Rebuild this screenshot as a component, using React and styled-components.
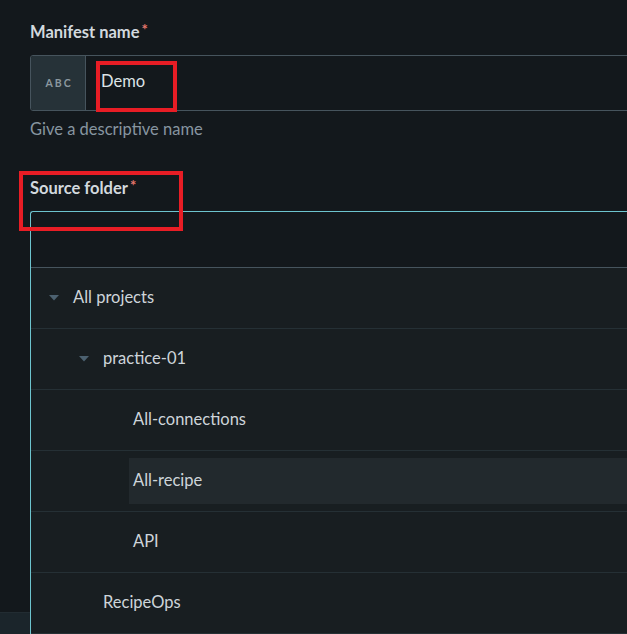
import React from 'react';
import styled, { createGlobalStyle } from 'styled-components';

const GlobalStyle = createGlobalStyle`
    html, body {
        margin: 0;
        padding: 0;
        background-color: #13181c;
        overflow: hidden;
    }
    body {
        font-family: 'Lato', 'Liberation Sans', sans-serif;
        color: #d3d9de;
    }
`

const Page = styled.div`
    position: relative;
    height: 634px;
    padding: 18px 0 0 30px;
    box-sizing: border-box;
    overflow: hidden;
`

const Field = styled.div`
    width: 720px;
    margin-bottom: ${p => p.gap || 0}px;
`

const Label = styled.div`
    font-size: 16.5px;
    font-weight: 700;
    line-height: 22px;
    color: #d2d9de;
    margin-bottom: 12px;
    > .label__required {
        color: #e5756b;
        font-size: 15px;
        margin-left: 2px;
        vertical-align: 3px;
    }
`

const InputBox = styled.div`
    display: flex;
    height: 56px;
    border: 1px solid #46545d;
    border-radius: 3px;
    box-sizing: border-box;
    overflow: hidden;
`

const Addon = styled.div`
    width: 55px;
    display: flex;
    align-items: center;
    justify-content: center;
    background-color: #263238;
    border-right: 1px solid #46545d;
    color: #8b989f;
    font-size: 10.5px;
    font-weight: 700;
    letter-spacing: 2px;
    padding-left: 2px;
    box-sizing: border-box;
`

const InputValue = styled.div`
    flex: 1;
    display: flex;
    align-items: center;
    padding: 0 0 4px 15px;
    font-size: 16.5px;
    color: #dde3e7;
`

const Hint = styled.div`
    margin-top: 7px;
    font-size: 16.5px;
    line-height: 22px;
    color: #8795a0;
`

const Dropdown = styled.div`
    position: relative;
    z-index: 1;
    border: 1px solid #6dc4ce;
    border-right: none;
    border-bottom: none;
    border-radius: 3px 0 0 0;
`

const Search = styled.div`
    height: 55px;
    border-bottom: 1px solid #46545d;
`

const List = styled.div`
    background-color: #181e21;
`

const Row = styled.div`
    display: flex;
    align-items: center;
    padding: 8px 0 8px ${p => 14 + p.level * 30}px;
    height: 44px;
    border-bottom: 1px solid #253035;
`

const Toggle = styled.span`
    width: 24px;
    flex-shrink: 0;
    display: flex;
    align-items: center;
    padding-left: 4px;
    box-sizing: border-box;
`

const Item = styled.div`
    flex: 1;
    height: 100%;
    display: flex;
    align-items: center;
    padding: 0 4px 2px;
    font-size: 16.5px;
    color: #ced5da;
    background-color: ${p => (p.active ? '#22292d' : 'transparent')};
`

const Footer = styled.div`
    position: absolute;
    left: 0;
    right: 0;
    bottom: 0;
    height: 21px;
    background-color: #1b252b;
    border-top: 1px solid #222c32;
`

const Mark = styled.div`
    position: absolute;
    z-index: 2;
    left: ${p => p.x}px;
    top: ${p => p.y}px;
    width: ${p => p.w}px;
    height: ${p => p.h}px;
    border: 4px solid #e81d25;
    box-sizing: border-box;
    pointer-events: none;
`

const Caret = () => (
    <svg width="10" height="6" viewBox="0 0 10 6">
        <path d="M0 0 H10 L5 5.5 Z" fill="#4c6170"/>
    </svg>
)

const folders = [
    { name: 'All projects', level: 0, open: true },
    { name: 'practice-01', level: 1, open: true },
    { name: 'All-connections', level: 2 },
    { name: 'All-recipe', level: 2, active: true },
    { name: 'API', level: 2 },
    { name: 'RecipeOps', level: 1 },
]

export default function App() {
    return (
        <Page>
            <GlobalStyle/>
            <Field gap={34}>
                <Label>Manifest name<span className="label__required">*</span></Label>
                <InputBox>
                    <Addon>ABC</Addon>
                    <InputValue>Demo</InputValue>
                </InputBox>
                <Hint>Give a descriptive name</Hint>
            </Field>
            <Field>
                <Label>Source folder<span className="label__required">*</span></Label>
                <Dropdown>
                    <Search/>
                    <List>
                        {folders.map(f => (
                            <Row key={f.name} level={f.level}>
                                <Toggle>{f.open && <Caret/>}</Toggle>
                                <Item active={f.active}>{f.name}</Item>
                            </Row>
                        ))}
                    </List>
                </Dropdown>
            </Field>
            <Footer/>
            <Mark x={96} y={61} w={81} h={51}/>
            <Mark x={19} y={171} w={164} h={60}/>
        </Page>
    )
}
